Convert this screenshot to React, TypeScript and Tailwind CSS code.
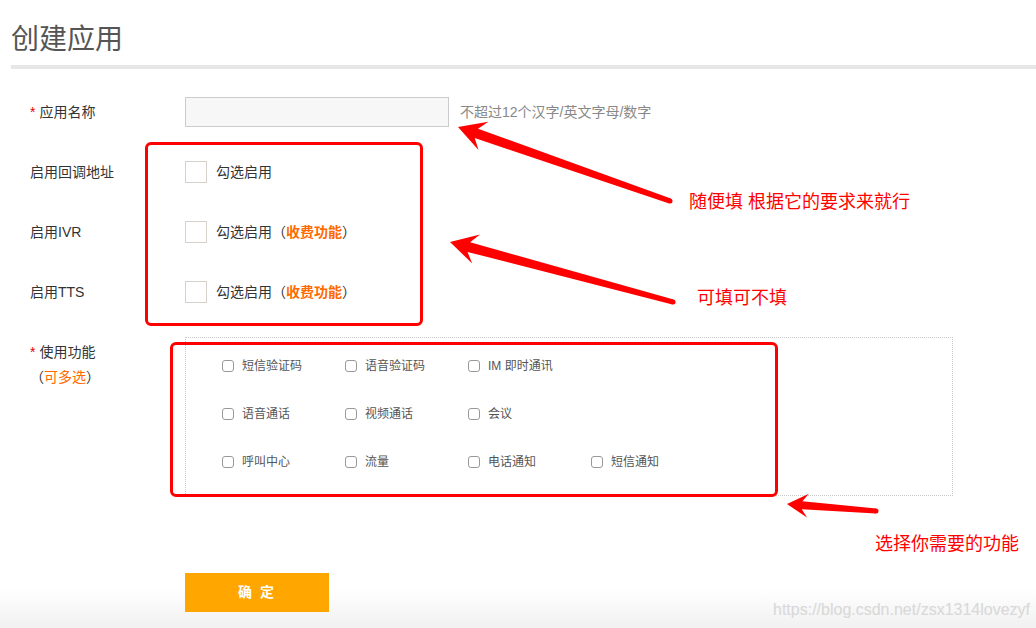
import React from 'react'

type Pt = [number, number]

// arrow polygon: tapered shaft + swept head
function arrowPoints(tail: Pt, tip: Pt, headLen: number, headHalf: number, neckHalf: number, tailHalf: number) {
  const dx = tip[0] - tail[0]
  const dy = tip[1] - tail[1]
  const len = Math.hypot(dx, dy)
  const ux = dx / len
  const uy = dy / len
  const nx = -uy
  const ny = ux
  const at = (back: number, side: number): string =>
    `${(tip[0] - ux * back + nx * side).toFixed(1)},${(tip[1] - uy * back + ny * side).toFixed(1)}`
  return [
    at(0, 0),
    at(headLen, headHalf),
    at(headLen * 0.72, neckHalf),
    at(len, tailHalf),
    at(len, -tailHalf),
    at(headLen * 0.72, -neckHalf),
    at(headLen, -headHalf),
  ].join(' ')
}

const arrows: { tail: Pt; tip: Pt; head: number; half: number; neck: number }[] = [
  { tail: [670, 201], tip: [458, 127], head: 27, half: 15, neck: 5 },
  { tail: [673, 302], tip: [450, 242], head: 27, half: 15, neck: 5 },
  { tail: [876, 511], tip: [787, 504], head: 21, half: 12, neck: 4 },
]

const features = [
  ['短信验证码', '语音验证码', 'IM 即时通讯'],
  ['语音通话', '视频通话', '会议'],
  ['呼叫中心', '流量', '电话通知', '短信通知'],
]

function Required() {
  return <span className="mr-[4px] text-[#e60000]">*</span>
}

function ToggleRow({ label, paid }: { label: string; paid?: boolean }) {
  return (
    <div className="mt-[30px] flex h-[30px] items-center">
      <div className="w-[155px] text-[14px] text-[#333]">{label}</div>
      <span className="h-[22px] w-[22px] border border-[#d6d1cb] bg-white" />
      <span className="ml-[9px] text-[14px] text-[#333]">
        勾选启用
        {paid && (
          <>
            （<span className="font-bold text-[#ff6a00]">收费功能</span>）
          </>
        )}
      </span>
    </div>
  )
}

export default function App() {
  return (
    <div className="relative h-[628px] w-[1036px] overflow-hidden bg-white font-['Liberation_Sans','Noto_Sans_CJK_SC',sans-serif]">
      <div className="pointer-events-none absolute inset-x-0 bottom-0 h-[40px] bg-gradient-to-b from-white to-[#f1f1f1]" />

      <div className="relative pl-[11px] pt-[20px]">
        <h1 className="text-[28px] leading-[40px] text-[#555]">创建应用</h1>
        <div className="mt-[5px] h-[4px] bg-[#e6e6e6]" />
      </div>

      <div className="relative pl-[30px]">
        <div className="mt-[28px] flex h-[30px] items-center">
          <div className="w-[155px] text-[14px] text-[#333]">
            <Required />
            应用名称
          </div>
          <input className="h-[30px] w-[264px] border border-[#ccc] bg-[#f7f7f7] outline-none" />
          <span className="ml-[11px] text-[14px] text-[#888]">不超过12个汉字/英文字母/数字</span>
        </div>

        <ToggleRow label="启用回调地址" />
        <ToggleRow label="启用IVR" paid />
        <ToggleRow label="启用TTS" paid />

        <div className="mt-[30px] flex">
          <div className="w-[155px] pt-[3px] text-[14px] leading-[25px] text-[#333]">
            <div>
              <Required />
              使用功能
            </div>
            <div>
              （<span className="text-[#ff6a00]">可多选</span>）
            </div>
          </div>
          <div className="flex h-[159px] w-[768px] flex-col gap-[24px] border border-dotted border-[#c8c8c8] pl-[36px] pt-[16px]">
            {features.map((row, i) => (
              <div key={i} className="flex h-[24px] items-center">
                {row.map((f) => (
                  <div key={f} className="flex w-[123px] items-center">
                    <span className="h-[12px] w-[12px] rounded-[3px] border border-[#999] bg-white" />
                    <span className="ml-[8px] text-[12px] text-[#555]">{f}</span>
                  </div>
                ))}
              </div>
            ))}
          </div>
        </div>

        <button
          type="button"
          className="ml-[155px] mt-[77px] h-[39px] w-[144px] bg-[#ffa600] text-[14px] font-bold tracking-[2px] text-white"
        >
          确 定
        </button>
      </div>

      {/* annotations */}
      <div className="absolute left-[145px] top-[142px] h-[184px] w-[278px] rounded-[6px] border-[3px] border-[#ff0000]" />
      <div className="absolute left-[170px] top-[342px] h-[155px] w-[608px] rounded-[6px] border-[3px] border-[#ff0000]" />

      <svg className="absolute inset-0" width={1036} height={628}>
        {arrows.map((a, i) => (
          <g key={i} fill="#ff0000">
            <polygon points={arrowPoints(a.tail, a.tip, a.head, a.half, a.neck, 2.5)} />
            <circle cx={a.tail[0]} cy={a.tail[1]} r={2.5} />
          </g>
        ))}
      </svg>

      <div className="absolute left-[689px] top-[190px] text-[18px] leading-[24px] text-[#ff0000]">随便填 根据它的要求来就行</div>
      <div className="absolute left-[697px] top-[286px] text-[18px] leading-[24px] text-[#ff0000]">可填可不填</div>
      <div className="absolute left-[875px] top-[532px] text-[18px] leading-[24px] text-[#ff0000]">选择你需要的功能</div>

      <div className="absolute left-[773px] top-[600px] text-[16px] leading-[20px] text-[#d9d9d9] [text-shadow:0_0_1px_#eee]">
        https://blog.csdn.net/zsx1314lovezyf
      </div>
    </div>
  )
}
